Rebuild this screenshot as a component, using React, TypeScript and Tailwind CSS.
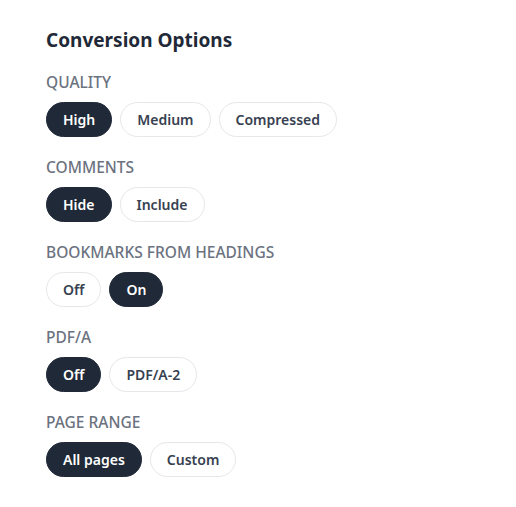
import { useState } from 'react'

const groups = [
  { label: 'Quality', options: ['High', 'Medium', 'Compressed'], initial: 'High' },
  { label: 'Comments', options: ['Hide', 'Include'], initial: 'Hide' },
  { label: 'Bookmarks from headings', options: ['Off', 'On'], initial: 'On' },
  { label: 'PDF/A', options: ['Off', 'PDF/A-2'], initial: 'Off' },
  { label: 'Page range', options: ['All pages', 'Custom'], initial: 'All pages' },
]

function OptionGroup({ label, options, initial }: { label: string; options: string[]; initial: string }) {
  const [value, setValue] = useState(initial)
  return (
    <div className="flex flex-col gap-[10px]">
      <div className="text-[15.5px] leading-5 font-medium uppercase text-[#6b7280]">{label}</div>
      <div className="flex gap-2">
        {options.map((o) => (
          <button
            key={o}
            onClick={() => setValue(o)}
            className={`h-[35px] px-4 rounded-full text-[14px] font-semibold border ${
              value === o
                ? 'bg-[#1f2937] border-[#1f2937] text-white'
                : 'bg-white border-[#e5e7eb] text-[#374151]'
            }`}
          >
            {o}
          </button>
        ))}
      </div>
    </div>
  )
}

export default function App() {
  return (
    <div className="min-h-screen bg-white px-[46px] pt-[26px] font-['Noto_Sans',sans-serif]">
      <h2 className="text-[19px] leading-7 font-bold text-[#1f2937] mb-[18px]">Conversion Options</h2>
      <div className="flex flex-col gap-5">
        {groups.map((g) => (
          <OptionGroup key={g.label} {...g} />
        ))}
      </div>
    </div>
  )
}
